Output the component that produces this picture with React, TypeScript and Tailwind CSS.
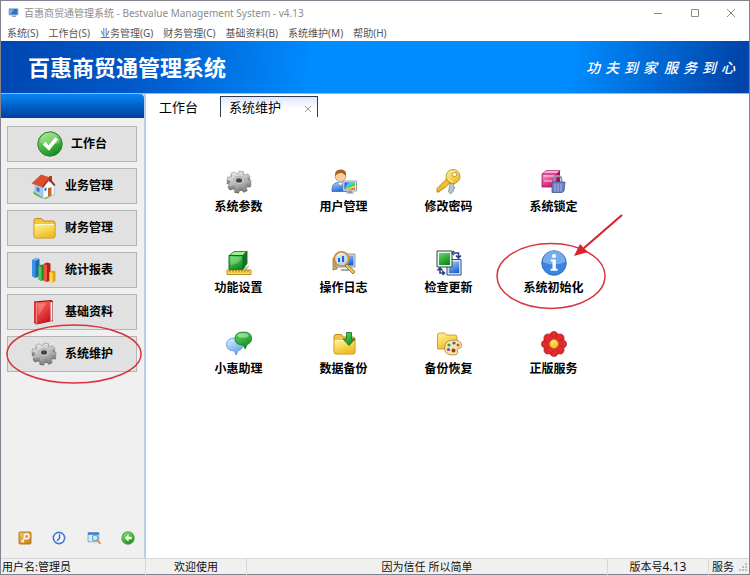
import { useState } from "react";
import type { ReactNode } from "react";

const FONT = "font-['Noto_Sans','Noto_Sans_CJK_SC',sans-serif]";

// Outline of a cog seen slightly from above
function gearPoints(cx: number, cy: number, rx: number, ry: number) {
  const teeth = 8;
  const pts: string[] = [];
  for (let i = 0; i < teeth; i++) {
    const base = (i / teeth) * Math.PI * 2 + 0.2;
    [
      [-0.27, 0.76],
      [-0.19, 1],
      [0.19, 1],
      [0.27, 0.76],
    ].forEach(([off, r]) => {
      pts.push(`${(cx + Math.cos(base + off) * rx * r).toFixed(2)},${(cy + Math.sin(base + off) * ry * r).toFixed(2)}`);
    });
  }
  return pts.join(" ");
}

function Svg({ children, className = "size-[26px]" }: { children: ReactNode; className?: string }) {
  return (
    <svg viewBox="0 0 26 26" className={`${className} shrink-0`} aria-hidden="true">
      {children}
    </svg>
  );
}

// Gradients shared by all icons
function Gradients() {
  const list = [
    ["gGrey", "#f4f4f4", "#8b8b8b"],
    ["gGreen", "#8be36f", "#0d8a1c"],
    ["gGreenFlat", "#5ed35e", "#0a8a20"],
    ["gYellow", "#fff08a", "#f0b81c"],
    ["gBlue", "#9ccbff", "#1c5fce"],
    ["gSky", "#d6ecff", "#5e9fe8"],
    ["gRed", "#ff6a5e", "#c9101c"],
    ["gPink", "#ff8ac6", "#c4126e"],
    ["gOrange", "#f8c45c", "#d0801a"],
    ["gWhite", "#ffffff", "#cfdcea"],
  ];
  return (
    <svg className="absolute size-0" aria-hidden="true">
      <defs>
        {list.map(([id, from, to]) => (
          <linearGradient key={id} id={id} x1="0.2" y1="0" x2="0.7" y2="1">
            <stop offset="0" stopColor={from} />
            <stop offset="1" stopColor={to} />
          </linearGradient>
        ))}
      </defs>
    </svg>
  );
}

function CheckIcon() {
  return (
    <Svg>
      <circle cx="13" cy="13" r="12.2" fill="url(#gGreen)" stroke="#2c7f2e" />
      <path d="M3 11.5a10 10 0 0 1 20 0q-10 4-20 0z" fill="#fff" opacity=".25" />
      <path d="M5.600 13.600l3-2.800 3 3.400 6.600-8 2.800 2.400-9 11.200z" fill="#fff" />
    </Svg>
  );
}

function HouseIcon() {
  return (
    <Svg>
      <path d="M2 20q3-6 7-2l6 6q5-1 9-5v2l-9 5q-9-2-13-6z" fill="#5ab82e" />
      <path d="M3.500 10l8.500 3.500v11l-8.500-5z" fill="#a8c8ee" />
      <path d="M12 13.500l6-6 5.500 6v8l-11.500 4z" fill="#f4f8ff" stroke="#9fb6d4" strokeWidth=".6" />
      <path d="M18 3h3v6h-3z" fill="#c23a1c" />
      <path d="M10 1.500l9 3-7 10-11.500-4z" fill="#d8502c" />
      <path d="M18.500 4.500l6 7.500-1.500 1-5-6-6 8-.6-1.800z" fill="#a92a16" />
      <path d="M17 15l3.500-.8v8.300l-3.500 1.200z" fill="#c66a2c" />
      <path d="M13.500 15l2-.4v3l-2 .6zM5.500 14l3 1.300v4l-3-1.500z" fill="#3978cc" />
    </Svg>
  );
}

function FolderShape() {
  return (
    <>
      <path d="M3 5.500q0-2 2-2h5.500l2 2.500h9.500q2 0 2 2v13q0 2-2 2h-17q-2 0-2-2z" fill="#f3c441" stroke="#c58d14" />
      <path d="M3.500 9.500h20v11.500q0 1.500-1.500 1.500h-17q-1.500 0-1.500-1.500z" fill="url(#gYellow)" />
      <path d="M4 9.500h19" stroke="#fffbd0" />
    </>
  );
}

function FolderIcon() {
  return (
    <Svg>
      <FolderShape />
    </Svg>
  );
}

function BarsIcon() {
  return (
    <Svg>
      <path d="M1 3l4-2 3.500 1v17l-4 2-3.500-2z" fill="#1767bd" />
      <path d="M1 3l4-2 3.500 1-4 2z" fill="#76b5f5" />
      <path d="M1 3l3.500 1v17l-3.500-2z" fill="#3d92e2" />
      <path d="M7.500 9l3-1.500 3 1v14l-3 1.500-3-1.500z" fill="#1c8f2c" />
      <path d="M7.500 9l3 1v14l-3-1.500z" fill="#59c556" />
      <path d="M12.500 7l3.500-1.500 3.500 1v17l-3.500 1.500-3.500-1.500z" fill="#b91c16" />
      <path d="M12.500 7l3.500 1v17l-3.500-1.500z" fill="#f05542" />
      <path d="M18.500 15l3-1.500 3 1v9.500l-3 1.500-3-1.500z" fill="#e0a512" />
      <path d="M18.500 15l3 1v9.500l-3-1.500z" fill="#ffe04a" />
    </Svg>
  );
}

function BookIcon() {
  return (
    <Svg>
      <path d="M3 2.500l17-1.500 2 1v20l-17 3.500-2-2z" fill="#8d0d14" />
      <path d="M18.500 3.500l3-.8v18.500l-3 1.500z" fill="#f2e8e8" />
      <path d="M5.500 3.500l14-1.500v20l-14 3z" fill="url(#gRed)" />
      <path d="M3 2.500l2.500 1v21.500l-2.500-2z" fill="#e3323c" />
      <path d="M5.500 3.500v21.500" stroke="#ffb3ae" strokeWidth=".7" />
      <path d="M7.500 5l8-1-8 13z" fill="#fff" opacity=".2" />
    </Svg>
  );
}

function GearIcon() {
  return (
    <Svg>
      <polygon points={gearPoints(13, 14.8, 12.4, 9.6)} fill="#6f6f6f" />
      <polygon points={gearPoints(13, 13.4, 12.4, 9.6)} fill="#8f8f8f" />
      <polygon points={gearPoints(13, 11.4, 12.2, 9.4)} fill="url(#gGrey)" stroke="#8a8a8a" strokeWidth=".6" />
      <ellipse cx="13" cy="11.400" rx="5.500" ry="4.200" fill="#c4c4c4" stroke="#a6a6a6" strokeWidth=".6" />
      <ellipse cx="13" cy="11.400" rx="3" ry="2.200" fill="#424242" />
    </Svg>
  );
}

function UserIcon() {
  return (
    <Svg>
      <path d="M1 22.500q-.5-8 5-9h6q4 1 4 9z" fill="url(#gBlue)" stroke="#2a62a8" strokeWidth=".7" />
      <path d="M7 13.500l2.500 3 2.500-3z" fill="#fff" />
      <circle cx="9.500" cy="7.500" r="5.200" fill="#f8cfa0" stroke="#b07840" strokeWidth=".6" />
      <path d="M3.800 7.500q-.5-7 6-7 6.500 0 5.200 7-2-3.500-5-3.500-4 0-6.200 3.500z" fill="#a85f20" />
      <path d="M12 12h13.500v10h-13.500z" fill="#e6edf4" stroke="#7e90a4" strokeWidth=".8" />
      <path d="M13.500 13.500h10.500v7h-10.500z" fill="#d43cd8" />
      <path d="M13.500 13.500h6l-3 3.500-3 3.500z" fill="#2e6af0" />
      <path d="M17 13.500h7v2l-10.500 5z" fill="#2fd8e2" />
      <path d="M24 13.500v4l-10.500 3z" fill="#46d448" />
      <path d="M24 16.500v4h-10.500z" fill="#f5e23c" />
      <path d="M24 18.800v1.700h-8z" fill="#f0503c" />
      <path d="M17 22h4v1.500h2v1h-8v-1h2z" fill="#8797a8" />
    </Svg>
  );
}

function KeyIcon() {
  return (
    <Svg>
      <path d="M15 11l4 1-1.500 5 1.500 2-2 1 .5 2-3 3-2-2.500z" fill="#b8c4ce" stroke="#6d7c88" strokeWidth=".7" />
      <path d="M10.500 10l4 3.500-6.500 6-1.500-.5-.5 2-2 .3-.5 1.700h-2.500v-3.500z" fill="#f0bd2c" stroke="#a87a10" strokeWidth=".8" />
      <circle cx="17" cy="7.500" r="7" fill="url(#gYellow)" stroke="#b08414" strokeWidth=".8" />
      <ellipse cx="18.500" cy="5.500" rx="2.500" ry="2" fill="#fff" stroke="#a87a10" strokeWidth=".7" />
      <path d="M12.500 9q1 4 5 4.500" stroke="#fffbc8" fill="none" />
    </Svg>
  );
}

function LockIcon() {
  return (
    <Svg>
      <path d="M1 5l4-3.500h14l-3.500 3.500z" fill="#ffa6d4" stroke="#a01458" strokeWidth=".6" />
      <path d="M15.500 5l3.500-3.500v12.500l-3.500 4z" fill="#a80d58" />
      <path d="M1 5h14.500v13h-14.500z" fill="url(#gPink)" stroke="#a01458" strokeWidth=".8" />
      <path d="M3 7h10M3 12h8" stroke="#ffd0e8" />
      <path d="M13.500 15v-4q0-4 3.500-4t3.500 4v4" stroke="#8e96b0" strokeWidth="1.800" fill="none" />
      <path d="M11 14l2-1h11l-1 9-2 1.500h-10z" fill="#6d7fc0" stroke="#44568e" strokeWidth=".8" />
      <path d="M14 14.500v8M17 14.500v8M20 14.500v8" stroke="#a9b9ea" />
    </Svg>
  );
}

function CubeIcon() {
  return (
    <Svg>
      <path d="M17 18l7-3-4 6z" fill="#bfc6bf" />
      <path d="M3 5.500l5-4h13l-4 4z" fill="#9cf08c" stroke="#147324" strokeWidth=".8" />
      <path d="M17 5.500l4-4v12l-4 5.500z" fill="#0b7a1c" stroke="#0c5c18" strokeWidth=".8" />
      <path d="M3 5.500h14v14h-14z" fill="url(#gGreenFlat)" stroke="#0c6c1c" />
      <path d="M4.500 7h11q-1 7-11 8z" fill="#fff" opacity=".25" />
      <path d="M1 20h24v4.500h-24z" fill="#ffd84a" stroke="#a87c10" strokeWidth=".8" />
      <path d="M4 20v2.500M7 20v2.500M10 20v2.500M13 20v2.500M16 20v2.500M19 20v2.500M22 20v2.500" stroke="#8a6410" strokeWidth=".8" />
    </Svg>
  );
}

function LogIcon() {
  return (
    <Svg>
      <path d="M2 8l4-1v12l-4 1z" fill="#c9a668" stroke="#8a6c3c" strokeWidth=".7" />
      <path d="M5 4h19v13h-19z" fill="#dce6f0" stroke="#6e8298" strokeWidth=".8" />
      <path d="M6.500 5.500h16v10h-16z" fill="url(#gBlue)" />
      <path d="M10 19h9v2h-9z" fill="#9aa8b8" />
      <circle cx="10.500" cy="9" r="7.200" fill="#cfe8ff" fillOpacity=".8" stroke="#d88c2e" strokeWidth="1.800" />
      <path d="M7 12v-4h2v4zM11 12v-6h2v6z" fill="#2a64b8" />
      <path d="M6 6q2-3 6-2.500" stroke="#fff" fill="none" />
      <path d="M16 14l8 7.500-2 2.500-8-8z" fill="#f1c04a" stroke="#95631a" strokeWidth=".8" />
    </Svg>
  );
}

function UpdateIcon() {
  return (
    <Svg>
      <path d="M11 9.500h14v15.500h-14z" fill="#e8f0f8" stroke="#284878" />
      <path d="M12.800 11.300h10.400v11.900h-10.400z" fill="url(#gBlue)" />
      <path d="M1 1h15v16h-15z" fill="#f2f6f2" stroke="#244c34" />
      <path d="M3 3h11v12h-11z" fill="url(#gGreenFlat)" />
      <path d="M18 3h4.500v4M20 5.500l2.500 2.500 2.500-2.500M18 1l-1.500 2 1.500 2" stroke="#28408c" strokeWidth="1.600" fill="none" />
      <path d="M8 23h-4v-4M1.500 20.500l2.500-2.500 2.500 2.500M6.500 21l2 2-2 2" stroke="#28408c" strokeWidth="1.600" fill="none" />
    </Svg>
  );
}

function InfoIcon() {
  return (
    <Svg>
      <circle cx="13" cy="13" r="12.300" fill="#3d83e0" stroke="#2a62b4" strokeWidth=".8" />
      <path d="M1.800 12a11.200 11.200 0 0 1 22.400 0q-11 5-22.400 0z" fill="#8ebcf6" opacity=".7" />
      <circle cx="13" cy="6" r="2.100" fill="#fff" />
      <path d="M9.800 9.500h5v9.300h1.800v1.900h-7v-1.900h1.900v-7.400h-1.700z" fill="#fff" />
    </Svg>
  );
}

function ChatIcon() {
  return (
    <Svg>
      <path d="M9 7q8 0 8 6.500 0 5-5 6.200l-2 4.300-1.500-4q-8-.5-8-6.500 0-6.500 8.500-6.500z" fill="url(#gSky)" stroke="#5a90cc" strokeWidth=".8" />
      <path d="M17.500 1q8 0 8 6.500 0 4.500-4.500 6l-1.800 4.500-2.200-4q-8 0-8-6.500t8.500-6.500z" fill="url(#gGreenFlat)" stroke="#11701e" strokeWidth=".8" />
      <ellipse cx="17" cy="4.500" rx="5.500" ry="2.300" fill="#fff" opacity=".4" />
    </Svg>
  );
}

function BackupIcon() {
  return (
    <Svg>
      <FolderShape />
      <path d="M15.500 1.500h5v6.500h3.500l-6 6.500-6-6.500h3.500z" fill="url(#gGreenFlat)" stroke="#0e6c1c" strokeWidth=".8" />
    </Svg>
  );
}

function RestoreIcon() {
  return (
    <Svg>
      <path d="M1.500 4q0-2 2-2h5l2 2h8.500q2 0 2 2v12h-19.500z" fill="url(#gYellow)" stroke="#c58d14" strokeWidth=".8" />
      <path d="M17.500 9q8 0 8 5.500 0 3-3 3-2.500.5-1 2.500 1.500 4-5 4-8 0-8-7 0-8 9-8z" fill="#fbe4a8" stroke="#a8802c" strokeWidth=".8" />
      <circle cx="13" cy="14" r="1.600" fill="#3c9a44" />
      <circle cx="18" cy="12" r="1.600" fill="#3464c8" />
      <circle cx="22" cy="14" r="1.500" fill="#d24a2c" />
      <circle cx="12.500" cy="18.500" r="1.600" fill="#7a4ac8" />
      <circle cx="17.500" cy="19.500" r="2" fill="#8a4a20" />
    </Svg>
  );
}

function FlowerIcon() {
  return (
    <Svg>
      {[0, 45, 90, 135, 180, 225, 270, 315].map((deg) => (
        <ellipse key={deg} cx="13" cy="5" rx="4.300" ry="4.600" fill="#e22c2c" stroke="#a8161c" strokeWidth=".6" transform={`rotate(${deg} 13 13)`} />
      ))}
      <circle cx="13" cy="13" r="7" fill="#e22c2c" />
      <circle cx="13" cy="13" r="4.400" fill="url(#gYellow)" stroke="#d07a10" strokeWidth=".8" />
    </Svg>
  );
}

const navItems = [
  { label: "工作台", icon: <CheckIcon /> },
  { label: "业务管理", icon: <HouseIcon /> },
  { label: "财务管理", icon: <FolderIcon /> },
  { label: "统计报表", icon: <BarsIcon /> },
  { label: "基础资料", icon: <BookIcon /> },
  { label: "系统维护", icon: <GearIcon />, marked: true },
];

const tools = [
  { label: "系统参数", icon: <GearIcon /> },
  { label: "用户管理", icon: <UserIcon /> },
  { label: "修改密码", icon: <KeyIcon /> },
  { label: "系统锁定", icon: <LockIcon /> },
  { label: "功能设置", icon: <CubeIcon /> },
  { label: "操作日志", icon: <LogIcon /> },
  { label: "检查更新", icon: <UpdateIcon /> },
  { label: "系统初始化", icon: <InfoIcon />, marked: true },
  { label: "小惠助理", icon: <ChatIcon /> },
  { label: "数据备份", icon: <BackupIcon /> },
  { label: "备份恢复", icon: <RestoreIcon /> },
  { label: "正版服务", icon: <FlowerIcon /> },
];

const menus = ["系统(S)", "工作台(S)", "业务管理(G)", "财务管理(C)", "基础资料(B)", "系统维护(M)", "帮助(H)"];

function TitleBar() {
  return (
    <header className="flex h-6 items-center bg-white pl-[7px] text-[10px] text-[#8c8c8c]">
      <svg viewBox="0 0 12 12" className="mr-1 size-3" aria-hidden="true">
        <path d="M1 1.500h9v6.500h-9z" fill="#2f6fc0" stroke="#a9c3e0" />
        <path d="M2 2.500h4l-3 4h-1z" fill="#74b2f0" />
        <path d="M4 8.500h4v1.500h-4z" fill="#8fa3b8" />
      </svg>
      <h1>百惠商贸通管理系统 - Bestvalue Management System - v4.13</h1>
      <div className="ml-auto flex pr-2">
        <button aria-label="最小化" className="flex h-6 w-[37px] items-center justify-center">
          <svg viewBox="0 0 10 10" className="size-[10px]"><path d="M1 5.500h8" stroke="#8c8c8c" /></svg>
        </button>
        <button aria-label="最大化" className="flex h-6 w-[37px] items-center justify-center">
          <svg viewBox="0 0 10 10" className="size-[10px]"><path d="M1.500 1.500h7v7h-7z" stroke="#8c8c8c" fill="none" /></svg>
        </button>
        <button aria-label="关闭" className="ml-2 flex h-6 w-5 items-center justify-center">
          <svg viewBox="0 0 10 10" className="size-[10px]"><path d="M1 1l8 8M9 1l-8 8" stroke="#8c8c8c" /></svg>
        </button>
      </div>
    </header>
  );
}

function Sidebar() {
  return (
    <aside className="flex w-[145px] shrink-0 flex-col border-r-2 border-[#b9cde8] bg-[#f0f0f0]">
      <div className="h-6 rounded-tr-sm bg-linear-to-b from-[#0a86f5] to-[#003f9f]" />
      <nav className="flex flex-col gap-[6px] pt-2 pr-[7px] pl-[6px]">
        {navItems.map((item) => (
          <button
            key={item.label}
            className="relative flex h-9 items-center justify-center gap-2 border border-[#b4b4b4] bg-[#e1e1e1] text-xs font-bold text-black"
          >
            {item.icon}
            {item.label}
            {item.marked && (
              <svg viewBox="0 0 136 60" className="pointer-events-none absolute -top-[13px] -left-[2px] h-[60px] w-[136px] max-w-none" aria-hidden="true">
                <ellipse cx="68" cy="30" rx="67" ry="29" fill="none" stroke="#d8333a" strokeWidth="1.500" />
              </svg>
            )}
          </button>
        ))}
      </nav>
      <div className="mt-auto flex justify-between pr-[9px] pb-[13px] pl-[17px]">
        <button aria-label="密码">
          <Svg className="size-[14px]">
            <rect x="2" y="2" width="22" height="22" rx="2" fill="url(#gOrange)" stroke="#b87820" strokeWidth="2" />
            <circle cx="16" cy="10" r="4.500" fill="none" stroke="#fff" strokeWidth="2.500" />
            <path d="M13 13l-7 7M8 18l3 3" stroke="#fff" strokeWidth="2.500" />
          </Svg>
        </button>
        <button aria-label="时间">
          <Svg className="size-[14px]">
            <circle cx="13" cy="13" r="10.500" fill="#f2f7ff" stroke="#4878cc" strokeWidth="3" />
            <path d="M14 6v8l-5 4" stroke="#3560b0" strokeWidth="2.500" fill="none" />
          </Svg>
        </button>
        <button aria-label="查找">
          <Svg className="size-[14px]">
            <path d="M2 3h20v17h-20z" fill="#d8ecfc" stroke="#6c9cd0" strokeWidth="1.500" />
            <path d="M2 3h20v4h-20z" fill="#3c78cc" />
            <circle cx="15" cy="13" r="5" fill="#c8f0f4" stroke="#6ca8c0" strokeWidth="2" />
            <path d="M19 17l6 7" stroke="#d49a4c" strokeWidth="3.500" />
          </Svg>
        </button>
        <button aria-label="返回">
          <Svg className="size-[14px]">
            <circle cx="13" cy="13" r="11.500" fill="url(#gGreen)" stroke="#4cac40" strokeWidth="2" />
            <path d="M14 6l-7 7 7 7v-4.500h6v-5h-6z" fill="#fff" />
          </Svg>
        </button>
      </div>
    </aside>
  );
}

export default function App() {
  const [tab, setTab] = useState("系统维护");

  return (
    <div className={`flex min-h-screen flex-col border border-[#85828f] bg-white text-black ${FONT}`}>
      <Gradients />
      <TitleBar />

      <nav className="flex h-4 items-center gap-[10px] bg-white pl-[6px] text-[10px] leading-4 text-[#555]">
        {menus.map((m) => (
          <button key={m} className="whitespace-nowrap">{m}</button>
        ))}
      </nav>

      {/* Banner */}
      <div className="flex h-[53px] items-center justify-between border-b border-[#7fc0fa] bg-[linear-gradient(100deg,#0046b0_0%,#0058c8_18%,#008cff_42%,#008cff_76%,#0046aa_98%)] pr-[14px] pl-[27px] text-white">
        <h2 className="text-[22px] font-bold">百惠商贸通管理系统</h2>
        <p className="flex gap-[7px] font-['Noto_Sans_CJK_SC',sans-serif] text-sm font-medium italic">
          {["功夫到家", "服务到心"].map((word) => (
            <span key={word} className="flex gap-[5px]">
              {word.split("").map((ch) => (
                <span key={ch}>{ch}</span>
              ))}
            </span>
          ))}
        </p>
      </div>

      <div className="flex flex-1">
        <Sidebar />
        <main className="flex-1 bg-white">
          <div role="tablist" className="flex pt-[2px] pl-[13px] text-[13px]">
            <button role="tab" aria-selected={tab === "工作台"} onClick={() => setTab("工作台")} className="mr-[22px] h-[21px] leading-5">
              工作台
            </button>
            <div className="flex h-[21px] w-[98px] items-center justify-between border border-b-0 border-[#333a50] bg-linear-to-b from-[#dfe7fa] to-white to-60% pr-[5px] pl-2">
              <button role="tab" aria-selected={tab === "系统维护"} onClick={() => setTab("系统维护")} className="leading-5">
                系统维护
              </button>
              <button aria-label="关闭标签" className="pt-[3px]">
                <svg viewBox="0 0 8 8" className="size-2"><path d="M1 1l6 6M7 1l-6 6" stroke="#999" /></svg>
              </button>
            </div>
          </div>

          <div className="grid grid-cols-[repeat(4,105px)] gap-y-[34px] pt-[52px] pl-10">
            {tools.map((t) => (
              <button key={t.label} className="relative flex h-[47px] flex-col items-center gap-[2px] text-xs leading-5 font-bold">
                {t.icon}
                {t.label}
                {t.marked && (
                  <svg viewBox="0 0 130 98" className="pointer-events-none absolute -top-9 -left-[6px] h-[98px] w-[130px] max-w-none" aria-hidden="true">
                    <ellipse cx="56" cy="62" rx="54" ry="32.500" fill="none" stroke="#d8333a" strokeWidth="1.500" />
                    <path d="M127 1l-38 33" stroke="#d8262e" strokeWidth="2.200" />
                    <path d="M79 42l6-12 8 8z" fill="#d8262e" />
                  </svg>
                )}
              </button>
            ))}
          </div>
        </main>
      </div>

      <footer className="flex h-4 items-center border-t border-[#d7d7d7] bg-[#f0f0f0] text-[11px] leading-4 text-[#111]">
        <span className="w-[145px] border-r border-[#d7d7d7] pl-px">用户名:管理员</span>
        <span className="w-[101px] border-r border-[#d7d7d7] text-center">欢迎使用</span>
        <span className="flex-1 border-r border-[#d7d7d7] text-center">因为信任 所以简单</span>
        <span className="w-[101px] border-r border-[#d7d7d7] text-center">版本号<span className="text-xs leading-4">4.13</span></span>
        <span className="w-7 pl-[3px]">服务</span>
        <svg viewBox="0 0 12 12" className="size-3" aria-hidden="true">
          <path d="M8 2h2v2h-2zM8 5h2v2h-2zM5 5h2v2h-2zM8 8h2v2h-2zM5 8h2v2h-2zM2 8h2v2h-2z" fill="#bdbdbd" />
        </svg>
      </footer>
    </div>
  );
}
